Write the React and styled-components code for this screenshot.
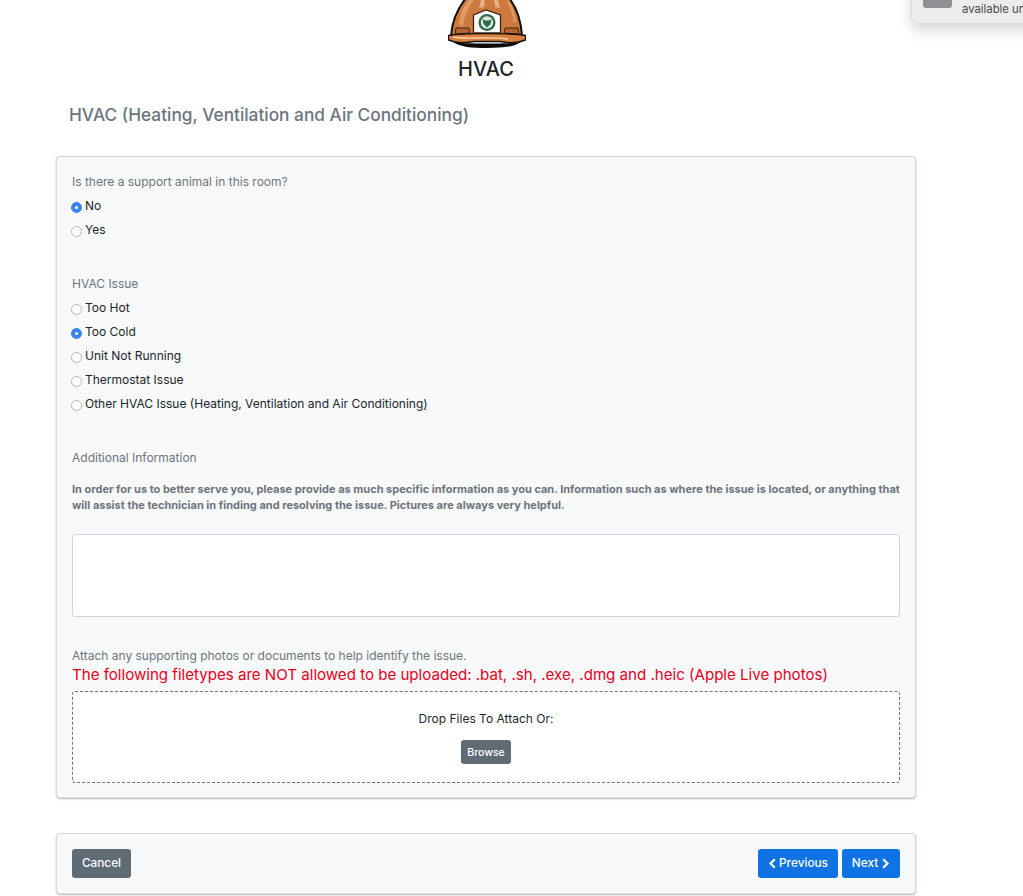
import React from "react";
import styled, { createGlobalStyle } from "styled-components";

const Global = createGlobalStyle`
  html, body { margin: 0; padding: 0; background: #fff; }
  body { font-family: Inter, "Liberation Sans", sans-serif; color: #212529; height: 896px; overflow: hidden; }
  * { box-sizing: border-box; }
`;

const Page = styled.div`
  position: relative;
  width: 1023px;
  height: 896px;
  overflow: hidden;
  padding: 0 107px 0 56px;
`;
const Header = styled.header`
  display: flex;
  flex-direction: column;
  align-items: center;
  height: 81px;
`;
const HatBox = styled.div`
  width: 78px;
  height: 48px;
  margin-left: 1px;
  svg { display: block; }
`;
const Brand = styled.div`
  font-size: 20px;
  font-weight: 500;
  line-height: 24px;
  margin-top: 9px;
  color: #212529;
`;
const Title = styled.h1`
  margin: 22px 0 0 13px;
  font-size: 17.3px;
  font-weight: 500;
  line-height: 24px;
  color: #6c757d;
  height: 31px;
`;
const Panel = styled.section`
  background: #f8f9fa;
  border: 1px solid #d6d8da;
  border-radius: 4px;
  box-shadow: 0 1px 2px rgba(0,0,0,.28);
  padding: ${p => p.$pad};
  margin-top: ${p => p.$top}px;
`;
const Question = styled.div`
  font-size: 12px;
  line-height: 16px;
  color: #6c757d;
  margin-bottom: ${p => p.$gap}px;
`;
const Option = styled.label`
  display: flex;
  align-items: center;
  height: 24px;
  font-size: 12px;
  color: #212529;
  gap: 3px;
`;
const Radio = styled.span`
  width: 11px;
  height: 11px;
  border-radius: 50%;
  margin: 4px 0 0 -1px;
  flex: none;
  display: flex;
  align-items: center;
  justify-content: center;
  background: ${p => (p.$on ? "#3b82f6" : "#fff")};
  border: 1px solid ${p => (p.$on ? "#3b82f6" : "#b4b6b9")};
  &::after {
    content: "";
    width: 3px;
    height: 3px;
    border-radius: 50%;
    background: ${p => (p.$on ? "#fff" : "transparent")};
  }
`;
const Group = styled.div`
  margin-bottom: ${p => p.$gap}px;
`;
const Help = styled.p`
  margin: 0 0 21px;
  font-size: 11px;
  font-weight: 700;
  line-height: 16px;
  color: #6c757d;
`;
const TextBox = styled.div`
  height: 83px;
  background: #fff;
  border: 1px solid #ced4da;
  border-radius: 3px;
  margin-bottom: 31px;
`;
const Warning = styled.div`
  font-size: 15.08px;
  line-height: 20px;
  color: #e8001c;
  margin-bottom: 6px;
`;
const Drop = styled.div`
  height: 92px;
  background: #fff;
  border: 1px dashed #6c757d;
  border-radius: 3px;
  display: flex;
  flex-direction: column;
  align-items: center;
  padding-top: 19px;
`;
const DropText = styled.div`
  font-size: 12px;
  line-height: 16px;
  color: #212529;
  margin-bottom: 13px;
`;
const Button = styled.button`
  display: inline-flex;
  align-items: center;
  justify-content: center;
  gap: ${p => p.$gap || 0}px;
  border: 0;
  border-radius: 3px;
  font-family: inherit;
  color: #fff;
  font-weight: 500;
  padding: 0 0 ${p => p.$pb || 0}px;
  width: ${p => p.$w}px;
  height: ${p => p.$h}px;
  font-size: ${p => p.$fs}px;
  background: ${p => (p.$primary ? "#0f73e6" : "#5f6b75")};
`;
const Footer = styled.div`
  display: flex;
  justify-content: space-between;
  align-items: center;
`;
const Actions = styled.div`
  display: flex;
  gap: 4px;
`;
const Toast = styled.aside`
  position: absolute;
  top: -31px;
  left: 911px;
  width: 160px;
  height: 55px;
  background: #ececec;
  border: 1px solid #dcdcdc;
  border-radius: 6px;
  box-shadow: 0 6px 14px rgba(0,0,0,.16);
  display: flex;
  padding: 24px 0 0 11px;
  gap: 10px;
`;
const ToastIcon = styled.div`
  width: 29px;
  height: 14px;
  background: #8f8f94;
  border-radius: 3px;
  flex: none;
`;
const ToastText = styled.div`
  font-size: 11.3px;
  line-height: 14px;
  color: #4a4a4a;
  padding-top: 8px;
  white-space: nowrap;
`;

const Hat = () => (
  <svg width="78" height="48" viewBox="0 0 78 48">
    <path d="M3 36 C4 20 10 8 18 -2 L61 -2 C69 8 73 20 74 36 Z" fill="#cd7a3e" stroke="#15110e" strokeWidth="2" />
    <path d="M11 24 C12 14 16 6 21 0 L26 0 C20 8 16 16 15 27 Z" fill="#e29a63" />
    <path d="M31 8 L33 0 L37 0 L36 7 Z M47 7 L46 0 L50 0 L52 8 Z" fill="#e8b083" />
    <path d="M60 1 C64 8 66 14 67 22" stroke="#e29a63" strokeWidth="2.5" fill="none" />
    <path d="M25.5 33 L25.5 15 L38 10 L52.5 15 L52.5 33 Z" fill="#fff" stroke="#3a2415" strokeWidth="1.3" />
    <circle cx="39" cy="22.5" r="8.5" fill="#2f6b4a" />
    <circle cx="39" cy="22.5" r="6.2" fill="#dfe9e2" />
    <path d="M34.5 19 L37 20.5 L41 20.5 L43.5 19 L42.5 24 L39 27.5 L35.5 24 Z" fill="#2f6b4a" />
    <path d="M7 34 L8 28 L21 28 L22 33 Z M56 33 L57 28 L70 28 L71 34 Z" fill="#b5642d" stroke="#3a2415" strokeWidth="1" />
    <path d="M0.5 35.5 C14 33 64 33 77.5 35.5 L77.5 40 C70 43 60 43 52 41.5 L26 41.5 C18 43 8 43 0.5 40 Z" fill="#d9813f" stroke="#15110e" strokeWidth="1.4" />
    <path d="M5 37 C20 40 40 36 60 39" stroke="#f6d3b4" strokeWidth="1.4" fill="none" />
    <path d="M5 42 C16 44 62 44 73 42 C66 47 54 48 39 48 C24 48 12 47 5 42 Z" fill="#0c0a09" />
  </svg>
);

const Left = () => (
  <svg width="9" height="11" viewBox="0 0 9 11"><path d="M6.8 1.2 L2.5 5.5 L6.8 9.8" fill="none" stroke="#fff" strokeWidth="2.2" /></svg>
);
const Right = () => (
  <svg width="9" height="11" viewBox="0 0 9 11"><path d="M2.2 1.2 L6.5 5.5 L2.2 9.8" fill="none" stroke="#fff" strokeWidth="2.2" /></svg>
);

const Choice = ({ on, children }) => (
  <Option><Radio $on={on} />{children}</Option>
);

export default function App() {
  return (
    <Page>
      <Global />
      <Toast>
        <ToastIcon />
        <ToastText>available until</ToastText>
      </Toast>
      <Header>
        <HatBox><Hat /></HatBox>
        <Brand>HVAC</Brand>
      </Header>
      <Title>HVAC (Heating, Ventilation and Air Conditioning)</Title>
      <Panel $top={22} $pad="17px 15px 14px">
        <Question $gap={3}>Is there a support animal in this room?</Question>
        <Group $gap={35}>
          <Choice on>No</Choice>
          <Choice>Yes</Choice>
        </Group>
        <Question $gap={3}>HVAC Issue</Question>
        <Group $gap={35}>
          <Choice>Too Hot</Choice>
          <Choice on>Too Cold</Choice>
          <Choice>Unit Not Running</Choice>
          <Choice>Thermostat Issue</Choice>
          <Choice>Other HVAC Issue (Heating, Ventilation and Air Conditioning)</Choice>
        </Group>
        <Question $gap={15}>Additional Information</Question>
        <Help>
          In order for us to better serve you, please provide as much specific information as you can. Information such as where the issue is located, or anything that will assist the technician in finding and resolving the issue. Pictures are always very helpful.
        </Help>
        <TextBox />
        <Question $gap={1}>Attach any supporting photos or documents to help identify the issue.</Question>
        <Warning>The following filetypes are NOT allowed to be uploaded: .bat, .sh, .exe, .dmg and .heic (Apple Live photos)</Warning>
        <Drop>
          <DropText>Drop Files To Attach Or:</DropText>
          <Button $w={50} $h={24} $fs={10.5}>Browse</Button>
        </Drop>
      </Panel>
      <Panel $top={35} $pad="15px">
        <Footer>
          <Button $w={59} $h={29} $fs={11.8} $pb={1}>Cancel</Button>
          <Actions>
            <Button $primary $w={80} $h={29} $fs={11.8} $gap={2} $pb={1}><Left />Previous</Button>
            <Button $primary $w={58} $h={29} $fs={11.8} $gap={3} $pb={1}>Next<Right /></Button>
          </Actions>
        </Footer>
      </Panel>
    </Page>
  );
}
